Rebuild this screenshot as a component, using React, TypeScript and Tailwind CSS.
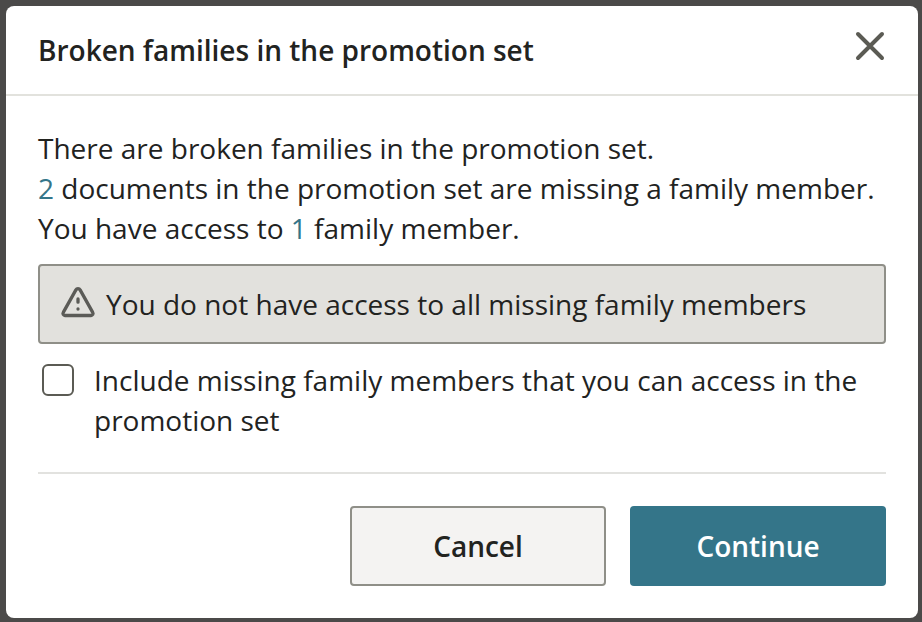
const WarningIcon = () => (
  <svg
    className="h-9 w-9 shrink-0 text-[#5b5b57]"
    fill="none"
    stroke="currentColor"
    strokeWidth={3.3}
    strokeLinecap="round"
    strokeLinejoin="round"
    viewBox="0 0 36 36"
    aria-hidden="true"
  >
    <path d="M15.9 3.9 3.3 26.4a2 2 0 0 0 1.8 3.1h25.8a2 2 0 0 0 1.8-3.1L20.1 3.9a2.4 2.4 0 0 0-4.2 0z" />
    <path d="M18 13v3.2M18 22.9v.1" />
  </svg>
);

const CloseIcon = () => (
  <svg
    className="h-8 w-8"
    fill="none"
    stroke="currentColor"
    strokeWidth={4}
    strokeLinecap="round"
    viewBox="0 0 32 32"
    aria-hidden="true"
  >
    <path d="M4 4l24 24M28 4L4 28" />
  </svg>
);

export default function App() {
  return (
    <div className="h-screen bg-[#4b4a49] pt-1.5 pr-1 pb-1 pl-1.5 font-['Open_Sans',sans-serif] text-[28px] leading-10 text-[#22231f]">
      <div role="dialog" className="flex h-full flex-col rounded-lg bg-white">
        <header className="flex h-[90px] items-center justify-between border-b-2 border-[#e2e2dd] px-8">
          <h2 className="font-semibold">Broken families in the promotion set</h2>
          <button type="button" aria-label="Close" className="-mt-2 text-[#5b5b54]">
            <CloseIcon />
          </button>
        </header>

        <div className="flex flex-1 flex-col px-8 pt-8">
          <div className="whitespace-nowrap">
            <p>There are broken families in the promotion set.</p>
            <p>
              <span className="text-[#347589]">2</span> documents in the promotion set are missing a family member.
            </p>
            <p>
              You have access to <span className="text-[#347589]">1</span> family member.
            </p>
          </div>

          <div className="mt-4 flex h-20 items-center gap-2.5 rounded-sm border-2 border-[#8f8f88] bg-[#e2e1dd] pl-5 whitespace-nowrap">
            <WarningIcon />
            <span>You do not have access to all missing family members</span>
          </div>

          <label className="mt-4 flex items-start gap-5 pl-1">
            <input type="checkbox" className="mt-1 h-8 w-8 shrink-0 appearance-none rounded-md border-2 border-[#5b5b54] bg-white" />
            <span>Include missing family members that you can access in the promotion set</span>
          </label>

          <footer className="mt-8 flex justify-end gap-6 border-t-2 border-[#e2e2df] pt-8 font-semibold">
            <button type="button" className="h-20 w-64 rounded-sm border-2 border-[#8f8f88] bg-[#f4f3f2]">
              Cancel
            </button>
            <button type="button" className="h-20 w-64 rounded-sm bg-[#347589] text-white">
              Continue
            </button>
          </footer>
        </div>
      </div>
    </div>
  );
}
